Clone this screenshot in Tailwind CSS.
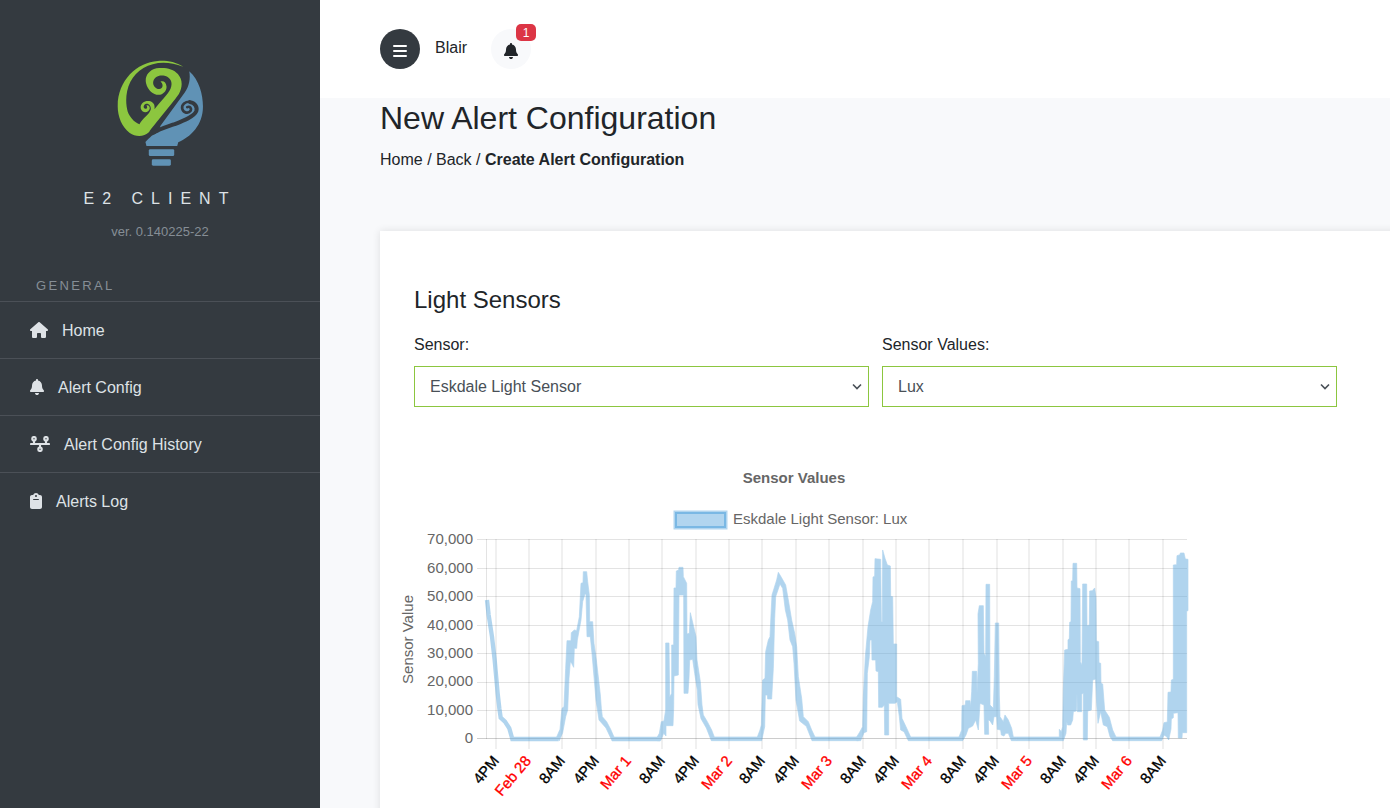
<!DOCTYPE html>
<html lang="en">
<head>
<meta charset="utf-8">
<meta name="viewport" content="width=device-width, initial-scale=1">
<title>E2 Client - New Alert Configuration</title>
<script src="https://cdn.jsdelivr.net/npm/@tailwindcss/browser@4"></script>
</head>
<body class="flex h-screen overflow-hidden bg-[#f8f9fb] font-['Liberation_Sans',Arial,sans-serif] text-base leading-6 text-[#212529]">

<aside class="w-80 shrink-0 bg-[#343a40] text-[#dee2e6]">
  <div class="flex flex-col items-center pt-[60px]">
    <svg class="h-[107px] w-[87px]" viewBox="140 45 260 320" role="img" aria-label="E2 logo">
      <path fill="#8cc63f" d="M338 65C315 50 285 46 262 48C200 52 142 105 142 183C142 215 155 245 178 263C195 275 220 276 236 260C247 244 314 164 325 147C336 125 337 105 322 87C308 70 280 66 258 70C233 76 222 96 227 115C232 135 248 149 264 149C279 149 289 136 288 124C287 112 278 106 270 110C281 118 276 132 266 132C253 131 245 118 249 107C253 93 270 89 282 92C302 98 307 113 300 131C294 146 266 173 252 192C253 182 252 177 246 172C238 166 224 167 217 173C208 181 209 193 217 199C225 204 236 200 238 190C238 183 233 179 228 181C232 186 230 192 225 191C218 190 218 181 224 177C233 172 242 181 241 192C238 207 215 220 207 237C190 231 178 215 172 200C165 175 165 140 180 110C205 63 265 36 338 65Z"/>
      <path fill="#6092b5" d="M356 79C386 105 397 150 397 184C397 240 360 275 323 291L320 302H228L225 290C238 277 247 266 264 261L270 242L342 143C356 124 360 101 356 79Z"/>
      <g fill="none" stroke="#343a40" stroke-linecap="round">
        <path stroke-width="8" d="M350 186C358 182 364 190 360 197C354 206 338 204 335 191C332 178 345 169 358 170"/>
        <path stroke-width="12" d="M358 171C373 173 381 186 377 198C371 214 340 226 312 237C290 245 268 250 250 262"/>
      </g>
      <rect fill="#6092b5" x="235" y="312" width="76" height="20" rx="4"/>
      <rect fill="#6092b5" x="244" y="342" width="57" height="19" rx="4"/>
    </svg>
    <p class="mt-5 tracking-[8px]">E2 CLIENT</p>
    <p class="mt-[11px] text-[13px] leading-5 text-[#868e96]">ver. 0.140225-22</p>
  </div>
  <h2 class="mt-[34px] h-[25px] pl-9 text-[13px] leading-5 tracking-[.18em] text-[#868e96]">GENERAL</h2>
  <nav>
    <ul>
      <li><a href="#" class="flex h-[57px] items-center gap-[14px] border-t border-[#4b5057] pl-[30px]">
        <svg class="h-4 w-[18px]" viewBox="0 0 576 512" fill="currentColor" aria-hidden="true"><path d="M575.8 255.5c0 18-15 32.1-32 32.1l-32 0 .7 160.2c0 2.7-.2 5.4-.5 8.1l0 16.2c0 22.1-17.9 40-40 40l-16 0c-1.1 0-2.2 0-3.3-.1c-1.4 .1-2.8 .1-4.2 .1L416 512l-24 0c-22.1 0-40-17.9-40-40l0-24 0-64c0-17.7-14.3-32-32-32l-64 0c-17.7 0-32 14.3-32 32l0 64 0 24c0 22.1-17.9 40-40 40l-24 0-31.9 0c-1.5 0-3-.1-4.5-.2c-1.2 .1-2.4 .2-3.6 .2l-16 0c-22.1 0-40-17.9-40-40l0-112c0-.9 0-1.9 .1-2.8l0-69.7-32 0c-18 0-32-14-32-32.1c0-9 3-17 10-24L266.4 8c7-7 15-8 22-8s15 2 21 7L564.8 231.5c8 7 12 15 11 24z"/></svg>
        <span class="pt-[2px]">Home</span></a></li>
      <li><a href="#" class="flex h-[57px] items-center gap-[14px] border-t border-[#4b5057] pl-[30px]">
        <svg class="h-4 w-[14px]" viewBox="0 0 448 512" fill="currentColor" aria-hidden="true"><path d="M224 0c-17.7 0-32 14.3-32 32V51.2C119 66 64 130.6 64 208v18.8c0 47-17.3 92.4-48.5 127.6l-7.4 8.3c-8.4 9.4-10.4 22.9-5.3 34.4S19.4 416 32 416H416c12.6 0 24-7.4 29.2-18.9s3.1-25-5.3-34.4l-7.4-8.3C401.3 319.2 384 273.9 384 226.8V208c0-77.4-55-142-128-156.8V32c0-17.7-14.3-32-32-32zm45.3 493.3c12-12 18.7-28.3 18.7-45.3H224 160c0 17 6.7 33.3 18.7 45.3s28.3 18.7 45.3 18.7s33.3-6.7 45.3-18.7z"/></svg>
        <span class="pt-[2px]">Alert Config</span></a></li>
      <li><a href="#" class="flex h-[57px] items-center gap-[14px] border-t border-[#4b5057] pl-[30px]">
        <svg class="h-4 w-5" viewBox="0 0 640 512" fill="none" stroke="currentColor" stroke-width="68" stroke-linecap="round" aria-hidden="true"><circle cx="128" cy="88" r="56"/><circle cx="512" cy="88" r="56"/><circle cx="320" cy="424" r="56"/><path d="M32 256H608M128 150V256M512 150V256M320 256V362"/></svg>
        <span class="pt-[2px]">Alert Config History</span></a></li>
      <li><a href="#" class="flex h-[57px] items-center gap-[14px] border-t border-[#4b5057] pl-[30px]">
        <svg class="h-4 w-3" viewBox="0 0 384 512" fill="currentColor" aria-hidden="true"><path fill-rule="evenodd" d="M192 0c-41.800 0-77.400 26.700-90.500 64H64C28.700 64 0 92.700 0 128V448c0 35.300 28.700 64 64 64H320c35.300 0 64-28.700 64-64V128c0-35.300-28.700-64-64-64H282.500C269.400 26.700 233.800 0 192 0zm0 64a32 32 0 1 1 0 64 32 32 0 1 1 0-64zM112 192H272c8.800 0 16 7.200 16 16s-7.200 16-16 16H112c-8.800 0-16-7.200-16-16s7.200-16 16-16z"/></svg>
        <span class="pt-[2px]">Alerts Log</span></a></li>
    </ul>
  </nav>
</aside>

<main class="min-w-0 flex-1 overflow-hidden">
  <header class="flex h-[98px] items-center bg-white pl-[60px]">
    <button type="button" aria-label="Toggle menu" class="flex size-10 items-center justify-center rounded-full bg-[#343a40] pt-[3px] text-white">
      <svg class="h-4 w-[14px]" viewBox="0 0 14 16" fill="none" stroke="currentColor" stroke-width="2" stroke-linecap="round" aria-hidden="true"><path d="M1 3H13M1 8H13M1 13H13"/></svg>
    </button>
    <span class="ml-[15px] pb-[2px]">Blair</span>
    <button type="button" aria-label="Notifications" class="relative ml-6 flex size-10 items-center justify-center rounded-full bg-[#f8f9fb] pt-[3px]">
      <svg class="h-4 w-[14px]" viewBox="0 0 448 512" fill="currentColor" aria-hidden="true"><path d="M224 0c-17.7 0-32 14.3-32 32V51.2C119 66 64 130.6 64 208v18.8c0 47-17.3 92.4-48.5 127.6l-7.4 8.3c-8.4 9.4-10.4 22.9-5.3 34.4S19.4 416 32 416H416c12.6 0 24-7.400 29.200-18.900s3.100-25-5.300-34.400l-7.400-8.300C401.300 319.200 384 273.900 384 226.800V208c0-77.400-55-142-128-156.800V32c0-17.700-14.300-32-32-32zm45.300 493.300c12-12 18.700-28.300 18.700-45.300H224 160c0 17 6.700 33.300 18.700 45.300s28.300 18.700 45.300 18.700s33.300-6.700 45.300-18.700z"/></svg>
      <span class="absolute -top-[5px] -right-[5px] flex h-[17px] w-5 items-center justify-center rounded-[5px] bg-[#dc3545] text-xs text-white">1</span>
    </button>
  </header>

  <section class="pl-[60px]">
    <h1 class="text-[32px] leading-10">New Alert Configuration</h1>
    <nav aria-label="Breadcrumb" class="mt-[10px]"><a href="#">Home</a> / <a href="#">Back</a> / <b>Create Alert Configuration</b></nav>

    <div class="-mr-2 mt-[59px] bg-white pt-[54px] pb-10 shadow-[0_0_8px_rgba(0,0,0,0.11)]">
      <form class="pr-[61px] pl-[34px]">
        <h2 class="text-2xl leading-[30px]">Light Sensors</h2>
        <div class="mt-[18px] grid grid-cols-2 gap-[13px]">
          <div>
            <label for="sensor">Sensor:</label>
            <div class="relative mt-[9px]">
              <select id="sensor" class="block h-[41px] w-full appearance-none border border-[#8cc63f] bg-white px-[15px] text-[#495057]"><option>Eskdale Light Sensor</option></select>
              <svg class="pointer-events-none absolute top-[17px] right-[7px] h-2 w-[10px]" viewBox="0 0 10 8" fill="none" stroke="#495057" stroke-width="1.6" aria-hidden="true"><path d="M1 1.500L5 5.500L9 1.500"/></svg>
            </div>
          </div>
          <div>
            <label for="values">Sensor Values:</label>
            <div class="relative mt-[9px]">
              <select id="values" class="block h-[41px] w-full appearance-none border border-[#8cc63f] bg-white px-[15px] text-[#495057]"><option>Lux</option></select>
              <svg class="pointer-events-none absolute top-[17px] right-[7px] h-2 w-[10px]" viewBox="0 0 10 8" fill="none" stroke="#495057" stroke-width="1.6" aria-hidden="true"><path d="M1 1.500L5 5.500L9 1.500"/></svg>
            </div>
          </div>
        </div>
      </form>

      <svg class="mt-[53px] ml-[14px] h-[350px] w-[800px]" viewBox="394 460 800 350" font-size="15" fill="#666" role="img" aria-label="Sensor values, Eskdale Light Sensor: Lux">
        <text x="794" y="483" text-anchor="middle" font-weight="bold">Sensor Values</text>
        <rect x="675.500" y="512.500" width="50" height="15" fill="#b1d5ef" stroke="#b1d5ef" stroke-width="4"/>
        <rect x="676" y="513" width="49" height="14" fill="none" stroke="#7ab8e4" stroke-width="2"/>
        <text x="733" y="524">Eskdale Light Sensor: Lux</text>
        <text transform="translate(413 639.500) rotate(-90)" text-anchor="middle">Sensor Value</text>

        <path stroke="#000" stroke-opacity=".11" stroke-width="1" d="M477 539.500H1187M477 568.500H1187M477 596.500H1187M477 625.500H1187M477 653.500H1187M477 682.500H1187M477 710.500H1187M486.500 539V739"/>
        <path stroke="#000" stroke-opacity=".2" stroke-width="1" d="M477 738.500H1187"/>
        <path stroke="#000" stroke-opacity=".06" stroke-width="2" d="M496 539V749M529 539V749M562 539V749M596 539V749M629 539V749M662 539V749M696 539V749M729 539V749M762 539V749M796 539V749M829 539V749M863 539V749M896 539V749M929 539V749M963 539V749M997 539V749M1029 539V749M1063 539V749M1096 539V749M1129 539V749M1163 539V749"/>

        <g text-anchor="end">
          <text x="473" y="544">70,000</text><text x="473" y="573">60,000</text><text x="473" y="601">50,000</text><text x="473" y="630">40,000</text>
          <text x="473" y="658">30,000</text><text x="473" y="686">20,000</text><text x="473" y="715">10,000</text><text x="473" y="743">0</text>
        </g>

        <!-- Sensor trace; paths are drawn in thirds of a pixel -->
        <g opacity=".5" fill="#63abdf" stroke="#63abdf" stroke-width="2">
          <g transform="translate(390 460) scale(.33333)">
            <path fill="none" stroke-width="13" d="M291 420L296 465L306 530L314 600L323 700L328 745L332 773L345 785L358 805L367 837H506M666 837H810"/>
            <path d="M500 831L510 808L516 745L522 740L527 625L531 542H543L544 518L553 510L560 512L568 470L573 370L579 368L580 335H590L593 365L598 405L599 485L608 485L612 550L619 600L626 660L631 705L634 745L637 770L650 785L662 808L672 831L666 842L648 804L627 780L618 720L606 580L601 530H591L588 402H585L578 425L573 480L562 540L560 565H553L551 622L545 610L541 605L537 655L533 750L527 770L518 818L508 842Z"/>
          </g>
          <g transform="translate(620 460) scale(.33333)">
            <path d="M112 831L118 820L124 785L132 783L137 750V549H147L149 712L155 700V555H161L162 384H168L169 333L176 330L177 322H189L190 350L200 370L201 522L208 520L211 458L221 500L228 530L231 600L241 665L246 735L250 765L262 785L275 810L283 831H412L420 810L424 795L428 660L435 655L437 575L445 540L450 530L453 465L456 405L470 360L475 337L484 352L497 375L505 420L515 480L524 520L530 560L535 650L545 715L550 770L565 785L575 810L585 831H715V842H576L559 799L539 783L528 720L522 610L518 560L510 540L503 480L496 450L488 385L480 372L467 410L464 475L460 625L455 717H443L442 705H436L434 800L425 842H274L259 804L243 776L234 734L232 690L224 640L218 598L209 600L207 655L204 700H192L191 405H177L175 645L162 648L161 745L159 797H138V828L131 820L122 842H112Z"/>
          </g>
          <g transform="translate(840 530) scale(.33333)">
            <path d="M50 621L58 608L68 590L70 500L76 380L84 290L92 240L98 215L99 141L104 139L105 86L122 88L124 275H127L128 60L135 85L142 105L151 108L152 199L158 200L160 342H170V500L182 508L186 565L198 590L212 621H357L365 600L366 527L376 525L377 512H390L392 530L395 485L397 424H410L411 490L415 400L414 252L418 227H430L432 370L437 380L438 163H449L450 525L460 535L463 440L466 279H476L478 495L480 560L490 575L495 555L505 570L515 595L520 621H530V632H514L505 610H497L492 618L484 615L482 600L472 598L470 560H462L458 585L450 572L445 570L446 613H434L432 525L420 520L415 600L407 570L398 588L385 595L378 615L368 632H205L192 605L182 600L178 560L172 515L165 520H146V615H134L133 525L127 532H116L115 425L108 423L107 390H96L95 330H90L88 380L82 430L80 605L72 608L62 632H50Z"/>
          </g>
          <g transform="translate(1010 530) scale(.33333)">
            <path d="M20 621H148V598L154 605L158 590L160 480L164 360L174 358V330L178 325L179 277L183 275L184 153L188 152L189 100H200L201 174L210 176L211 395L216 405L218 162H230L231 287L238 285L239 183L247 182L254 174L258 205L259 333L266 335L267 398L272 400L273 460L278 462L284 540L298 562L308 600L318 621H450L458 600L462 578L472 576L474 487L483 486L484 450L490 448V105L500 104L501 77L510 74L511 69H522L526 87L534 88V242L530 243V608H517L516 624H505L504 548L490 550V563L484 567L483 597L476 630L470 620L462 615L455 632H308L300 620L292 590L280 585L272 545L264 580L260 520L257 447L248 450L244 540L233 543L232 630H220V490L215 492V545H202L201 490L199 543L190 545L188 570L182 585H173L170 575L168 610L160 632H20Z"/>
          </g>
        </g>

        <g text-anchor="end" fill="#000">
          <g stroke="#000" stroke-width=".3">
            <text transform="translate(496 758) rotate(-50)" dy="5">4PM</text>
            <text transform="translate(562 758) rotate(-50)" dy="5">8AM</text>
            <text transform="translate(596 758) rotate(-50)" dy="5">4PM</text>
            <text transform="translate(662 758) rotate(-50)" dy="5">8AM</text>
            <text transform="translate(696 758) rotate(-50)" dy="5">4PM</text>
            <text transform="translate(762 758) rotate(-50)" dy="5">8AM</text>
            <text transform="translate(796 758) rotate(-50)" dy="5">4PM</text>
            <text transform="translate(863 758) rotate(-50)" dy="5">8AM</text>
            <text transform="translate(896 758) rotate(-50)" dy="5">4PM</text>
            <text transform="translate(963 758) rotate(-50)" dy="5">8AM</text>
            <text transform="translate(996 758) rotate(-50)" dy="5">4PM</text>
            <text transform="translate(1063 758) rotate(-50)" dy="5">8AM</text>
            <text transform="translate(1096 758) rotate(-50)" dy="5">4PM</text>
            <text transform="translate(1163 758) rotate(-50)" dy="5">8AM</text>
          </g>
          <g fill="#f00" stroke="#f00" stroke-width=".3">
            <text transform="translate(528 758) rotate(-50)" dy="5">Feb 28</text>
            <text transform="translate(628 758) rotate(-50)" dy="5">Mar 1</text>
            <text transform="translate(729 758) rotate(-50)" dy="5">Mar 2</text>
            <text transform="translate(829 758) rotate(-50)" dy="5">Mar 3</text>
            <text transform="translate(929 758) rotate(-50)" dy="5">Mar 4</text>
            <text transform="translate(1029 758) rotate(-50)" dy="5">Mar 5</text>
            <text transform="translate(1129 758) rotate(-50)" dy="5">Mar 6</text>
          </g>
        </g>
      </svg>
    </div>
  </section>
</main>
</body>
</html>
